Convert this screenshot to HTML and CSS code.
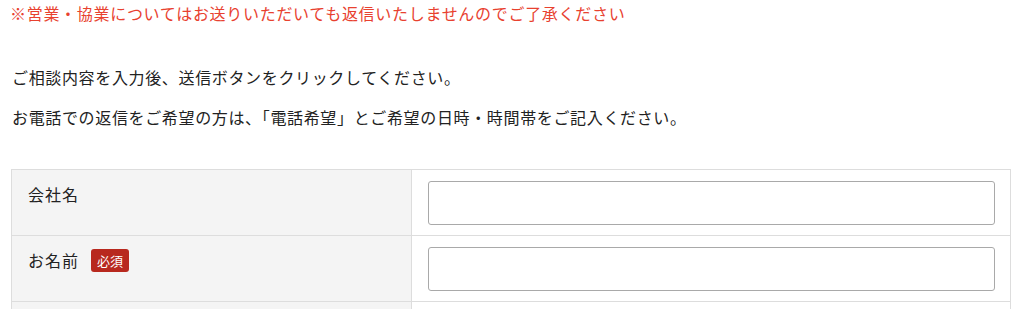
FILE: index.html
```html
<!DOCTYPE html>
<html lang="ja">
<head>
<meta charset="utf-8">
<title>お問い合わせ</title>
<link rel="stylesheet" href="styles.css">
</head>
<body>
<div class="page">
  <p class="notice">※営業・協業についてはお送りいただいても返信いたしませんのでご了承ください</p>
  <div class="lead">
    <p>ご相談内容を入力後、送信ボタンをクリックしてください。</p>
    <p>お電話での返信をご希望の方は、「電話希望」とご希望の日時・時間帯をご記入ください。</p>
  </div>
  <table class="form">
    <tr>
      <th>会社名</th>
      <td><input type="text" class="field"></td>
    </tr>
    <tr>
      <th>お名前<span class="req">必須</span></th>
      <td><input type="text" class="field"></td>
    </tr>
    <tr>
      <th></th>
      <td><input type="text" class="field"></td>
    </tr>
  </table>
</div>
</body>
</html>
```

FILE: styles.css
```css
html, body {
  margin: 0;
  padding: 0;
  background: #fff;
}
body {
  font-family: "Noto Sans CJK JP", "Noto Sans", sans-serif;
  font-size: 16px;
  color: #222;
}
.page {
  padding: 1px 0 0 0;
}
p {
  margin: 0;
}
.notice {
  margin: 0 0 0 10px;
  line-height: 24px;
  color: #e8412f;
  letter-spacing: 0.7px;
}
.lead {
  margin: 40px 0 0 12px;
  display: flex;
  flex-direction: column;
  gap: 16px;
}
.lead p {
  line-height: 24px;
  letter-spacing: 0.65px;
}
.form {
  margin: 40px 0 0 11px;
  width: 1000px;
  border-collapse: collapse;
  table-layout: fixed;
}
.form th, .form td {
  border: 1px solid #ddd;
  vertical-align: top;
}
.form th {
  width: 367px;
  background: #f4f4f4;
  text-align: left;
  font-weight: normal;
  padding: 12px 16px;
  line-height: 24px;
  letter-spacing: 1px;
}
.form td {
  padding: 11px 15px 10px 16px;
}
.field {
  display: block;
  box-sizing: border-box;
  width: 100%;
  height: 44px;
  margin: 0;
  border: 1px solid #a9a9a9;
  border-radius: 3px;
  background: #fff;
  font: inherit;
}
.req {
  display: inline-block;
  margin-left: 12px;
  padding: 0 6px;
  height: 23px;
  line-height: 23px;
  font-size: 13px;
  letter-spacing: 0;
  color: #fff;
  background: #b8281e;
  border-radius: 3px;
  vertical-align: 1px;
}
```
